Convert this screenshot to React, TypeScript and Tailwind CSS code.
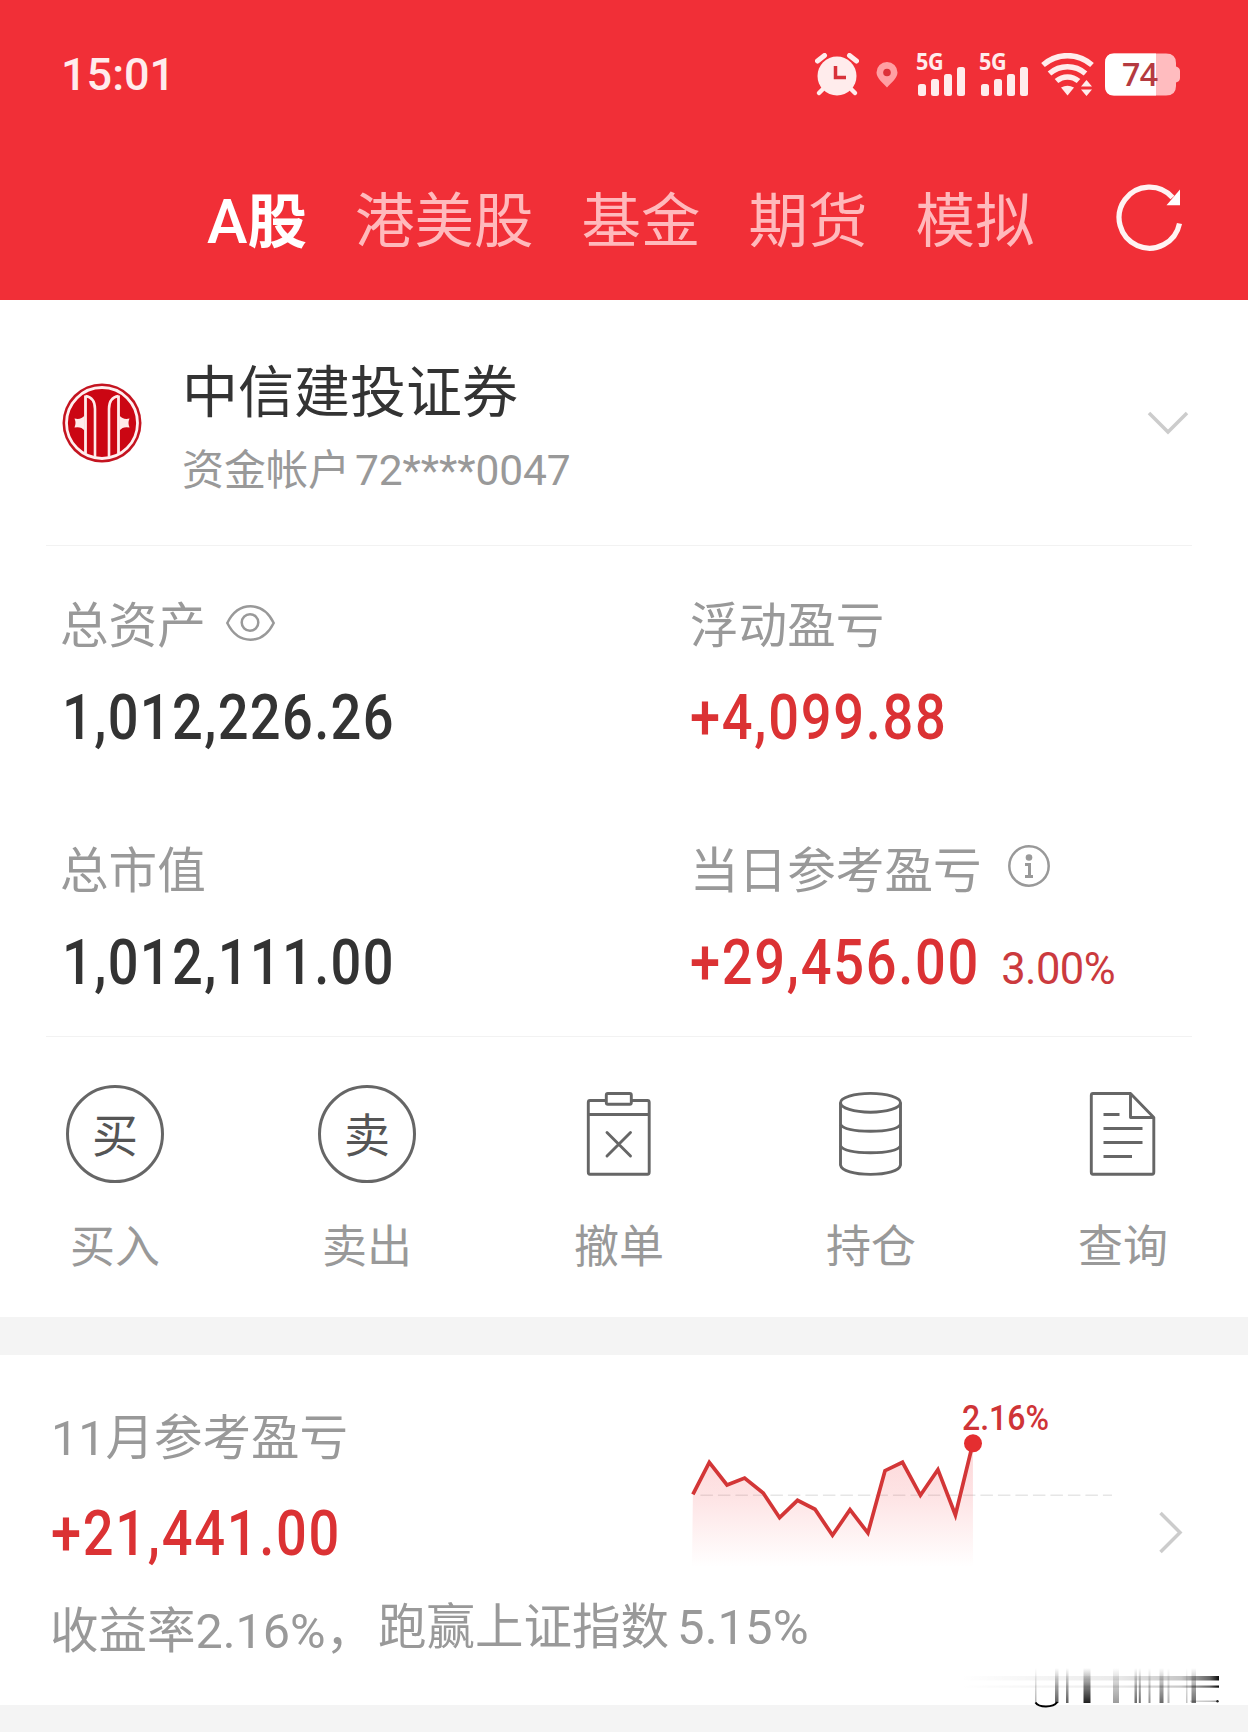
import type { ReactNode } from "react";

const tabs = ["港美股", "基金", "期货", "模拟"];

const chartPoints: [number, number][] = [
  [12.9, 99.3], [29.3, 67.3], [47, 90], [64.6, 83], [83.2, 98], [99.6, 122.7],
  [117.5, 105.3], [135, 114.3], [152.5, 140.3], [170, 114.7], [187.9, 138], [205, 75.7],
  [222.5, 67.3], [240.4, 100.3], [257.9, 74.7], [275.4, 120], [292.9, 48.3],
];

function AlarmIcon() {
  return (
    <svg width="44" height="44" viewBox="0 0 44 44" fill="none">
      <circle cx="22" cy="23" r="19.5" fill="#ffecec" />
      <path d="M2.5 8 9.5 2.5M41.5 8 34.500 2.5" stroke="#ffecec" strokeWidth="5" strokeLinecap="round" />
      <path d="M8 36 4 40M36 36 40 40" stroke="#ffecec" strokeWidth="4.500" strokeLinecap="round" />
      <path d="M20.500 13V24.500H31" stroke="#d8323a" strokeWidth="3.500" />
    </svg>
  );
}

function PinIcon() {
  return (
    <svg width="22" height="26" viewBox="0 0 22 26">
      <path d="M11 25.500C7 21 .5 16 .5 10.500a10.500 10.500 0 0 1 21 0C21.500 16 15 21 11 25.500z" fill="#ff9fa3" />
      <circle cx="11" cy="10.500" r="3.800" fill="#dd3038" />
    </svg>
  );
}

function Signal() {
  return (
    <div className="relative h-[44px] w-[50px]">
      <span className="absolute -top-[1px] left-0 origin-left scale-x-[0.92] font-['Open_Sans'] text-[23.500px] leading-[19px] font-bold tracking-[-0.5px] text-[#ffecec]">
        5G
      </span>
      <svg className="absolute inset-0" width="50" height="44" viewBox="0 0 50 44" fill="#ffecec">
        <rect x="2" y="31" width="8" height="12" rx="2.500" />
        <rect x="15" y="26" width="8" height="17" rx="2.500" />
        <rect x="28" y="21" width="8" height="22" rx="2.500" />
        <rect x="41" y="14" width="8" height="29" rx="2.500" />
      </svg>
    </div>
  );
}

function WifiIcon() {
  return (
    <svg width="53" height="43" viewBox="0 0 53 43" fill="none" stroke="#ffecec" strokeWidth="5.500">
      <path d="M2 12C16 -.5 37 -.5 51 12" />
      <path d="M8.500 20.500C19 11.500 34 11.500 44.500 20.500" />
      <path d="M15.500 28C22 22.500 31 22.500 37.500 28" />
      <path d="M20 34.500Q26.500 31 33 34.500L26.500 42.500z" fill="#ffecec" stroke="none" />
      <path d="M40 33.500 45.500 27 51 33.500zM40 36.500 45.500 43 51 36.500z" fill="#ffecec" stroke="none" />
    </svg>
  );
}

function Battery() {
  return (
    <div className="relative h-[43px] w-[75px]">
      <svg className="absolute inset-0" width="75" height="43" viewBox="0 0 75 43">
        <path d="M9 .5H61Q71 .5 71 10V13.500Q75 14.500 75 18V25Q75 28.500 71 29.500V33Q71 42.500 61 42.500H9Q0 42.500 0 33V10Q0 .5 9 .5z" fill="#ffbcbf" />
        <path d="M9 .5H51V42.500H9Q0 42.500 0 33V10Q0 .5 9 .5z" fill="#fff" />
      </svg>
      <span className="absolute top-0 left-[17px] font-['Open_Sans'] text-[32px] leading-[41px] font-semibold tracking-[-0.5px] text-[#b53a40]">
        74
      </span>
    </div>
  );
}

function RefreshIcon() {
  return (
    <svg width="70" height="70" viewBox="0 0 70 70" fill="none">
      <path d="M64.500 41.500A30.500 30.500 0 1 1 57.500 15.500" stroke="#fff3f3" strokeWidth="5.200" />
      <path d="M65 7.500V23.200H51.500z" fill="#fff" />
    </svg>
  );
}

function BrokerLogo() {
  return (
    <svg width="80" height="80" viewBox="0 0 80 80" fill="none">
      <circle cx="40" cy="40" r="39.500" fill="#c41420" />
      <circle cx="40" cy="40" r="35.500" fill="#cb0613" stroke="#fff0f0" strokeWidth="2.800" />
      <path d="M23.500 13C30 14 33 18 33 26V74M56.500 13C50 14 47 18 47 26V74" stroke="#ffeaea" strokeWidth="2.600" />
      <path d="M23.500 12.500V70.500M56.500 12.500V70.500" stroke="#ffeaea" strokeWidth="2.800" />
      <path d="M22.500 32.500Q19 37 12.500 35.500Q14.500 40 12.500 44.500Q19 43 22.500 47.500z" fill="#ffeaea" />
      <path d="M57.500 32.500Q61 37 67.500 35.500Q65.500 40 67.500 44.500Q61 43 57.500 47.500z" fill="#ffeaea" />
    </svg>
  );
}

function EyeIcon() {
  return (
    <svg width="49" height="36" viewBox="0 0 49 36" fill="none" stroke="#999" strokeWidth="2.500">
      <path d="M1.300 18C7 6.500 15 1.300 24.500 1.300S42 6.500 47.700 18C42 29.500 34 34.700 24.500 34.700S7 29.500 1.300 18z" />
      <circle cx="24" cy="17.500" r="8.300" />
    </svg>
  );
}

function InfoIcon() {
  return (
    <svg width="42" height="42" viewBox="0 0 42 42" fill="none" stroke="#999">
      <circle cx="21" cy="21" r="19.700" strokeWidth="2.500" />
      <circle cx="21" cy="12.500" r="3.300" fill="#999" stroke="none" />
      <path d="M17 19.500H21.500V31M17 31.500H25" strokeWidth="3" />
    </svg>
  );
}

function CircleIcon({ children }: { children: ReactNode }) {
  return (
    <div className="flex h-[98px] w-[98px] items-center justify-center rounded-full border-[3px] border-[#666] pt-[3px] text-[46px] leading-none text-[#555]">
      {children}
    </div>
  );
}

function CancelIcon() {
  return (
    <svg width="98" height="98" viewBox="0 0 98 98" fill="none" stroke="#666" strokeWidth="2.900" strokeLinejoin="round">
      <path d="M36 15.500H20Q18.300 15.500 18.300 17.500V87Q18.300 89.300 20 89.300H77.500Q79.200 89.300 79.200 87V17.500Q79.200 15.500 77.500 15.500H62M18.300 29.500H79.200" />
      <rect x="36.300" y="8.500" width="25" height="10.800" rx="1.500" />
      <path d="M37 47.500 60.500 71M60.500 47.500 37 71" strokeLinecap="round" />
    </svg>
  );
}

function PositionIcon() {
  return (
    <svg width="98" height="98" viewBox="0 0 98 98" fill="none" stroke="#666" strokeWidth="2.900">
      <ellipse cx="48.500" cy="17.800" rx="30" ry="9.400" />
      <path d="M18.500 17.800V80C19.500 86 32.500 89.400 48.500 89.400S77.500 86 78.500 80V17.800" />
      <path d="M18.500 39.500C21.500 44 33.500 46.200 48.500 46.200S75.500 44 78.500 39.500M18.500 61C21.500 65.500 33.500 67.700 48.500 67.700S75.500 65.500 78.500 61" />
    </svg>
  );
}

function QueryIcon() {
  return (
    <svg width="98" height="98" viewBox="0 0 98 98" fill="none" stroke="#666" strokeWidth="2.900" strokeLinejoin="round">
      <path d="M56.500 8.500H19Q17.300 8.500 17.300 10.500V87Q17.300 89.300 19 89.300H78Q79.800 89.300 79.800 87V32.500L56.500 8.500V32.500H79.800" />
      <path d="M29.500 29.500H45.500M29.500 43.500H68.500M29.500 57.500H68.500M29.500 71.500H58" />
    </svg>
  );
}

const actions = [
  { label: "买入", icon: <CircleIcon>买</CircleIcon> },
  { label: "卖出", icon: <CircleIcon>卖</CircleIcon> },
  { label: "撤单", icon: <CancelIcon /> },
  { label: "持仓", icon: <PositionIcon /> },
  { label: "查询", icon: <QueryIcon /> },
];

function Asset({ label, value, icon, extra, red }: {
  label: string;
  value: string;
  icon?: ReactNode;
  extra?: string;
  red?: boolean;
}) {
  return (
    <div className="h-[245px] pt-[36px]">
      <div className={`flex h-[90px] items-center ${red ? "" : "-ml-[2px]"}`}>
        <span className="text-[48.6px] text-[#999]">{label}</span>
        {icon}
      </div>
      <div className="flex h-[90px] items-center">
        <span
          className={`origin-left scale-x-[0.86] text-[63px] font-medium ${
            red ? "tracking-[2px] text-[#db3234]" : "tracking-[1.6px] text-[#333]"
          }`}
        >
          {value}
        </span>
        {extra && <span className="mt-[15px] -ml-[26px] text-[43.500px] tracking-[-0.6px] text-[#cb3a3e]">{extra}</span>}
      </div>
    </div>
  );
}

function ProfitChart() {
  const line = chartPoints.map((p) => p.join(",")).join(" ");
  return (
    <svg width="440" height="180" viewBox="0 0 440 180" fill="none">
      <defs>
        <linearGradient id="area" x1="0" y1="48" x2="0" y2="172" gradientUnits="userSpaceOnUse">
          <stop offset="0" stopColor="#f5333a" stopOpacity="0.2" />
          <stop offset="0.450" stopColor="#f5333a" stopOpacity="0.13" />
          <stop offset="1" stopColor="#f5333a" stopOpacity="0" />
        </linearGradient>
      </defs>
      <path d="M20.400 100.300H432" stroke="#e6e6e6" strokeWidth="1.500" strokeDasharray="12.500 5" />
      <polygon points={`12,172 ${line} 293,172`} fill="url(#area)" />
      <polyline points={line} stroke="#d33637" strokeWidth="3.700" strokeLinejoin="miter" />
      <circle cx="293" cy="48.300" r="9" fill="#e42e30" />
      <text x="282" y="35" fontSize="35" fontWeight="500" fill="#cf3437" textLength="87" lengthAdjust="spacingAndGlyphs">
        2.16%
      </text>
    </svg>
  );
}

const smearBars = [
  { x: 75, w: 1.500, o: 0.3 },
  { x: 95, w: 3.500, o: 0.65 },
  { x: 106, w: 2.500, o: 0.65 },
  { x: 123.500, w: 7, o: 0.9 },
  { x: 153, w: 6, o: 0.4 },
  { x: 174.500, w: 2.500, o: 0.6 },
  { x: 178.800, w: 2, o: 0.6 },
  { x: 188.500, w: 2, o: 0.45 },
  { x: 199.500, w: 4, o: 0.6 },
  { x: 207.500, w: 2, o: 0.3 },
  { x: 226, w: 1.500, o: 0.25 },
  { x: 231.500, w: 4.500, o: 0.6 },
];

function Smear() {
  return (
    <svg className="absolute right-[28px] bottom-[22px]" width="260" height="50" viewBox="0 0 260 50" fill="none">
      <defs>
        <linearGradient id="fade-y" x1="0" y1="8" x2="0" y2="44" gradientUnits="userSpaceOnUse">
          <stop offset="0" stopColor="#000" stopOpacity="0" />
          <stop offset="0.500" stopColor="#000" stopOpacity="0.550" />
          <stop offset="1" stopColor="#000" />
        </linearGradient>
        <linearGradient id="fade-x" x1="0" y1="0" x2="260" y2="0" gradientUnits="userSpaceOnUse">
          <stop offset="0" stopColor="#000" stopOpacity="0" />
          <stop offset="0.600" stopColor="#000" stopOpacity="0.080" />
          <stop offset="0.850" stopColor="#000" stopOpacity="0.220" />
          <stop offset="0.960" stopColor="#000" stopOpacity="0.6" />
          <stop offset="1" stopColor="#000" />
        </linearGradient>
      </defs>
      {smearBars.map((b) => (
        <rect key={b.x} x={b.x} y="8" width={b.w} height="35" fill="url(#fade-y)" opacity={b.o} />
      ))}
      <rect x="0" y="16" width="259" height="4.500" fill="url(#fade-x)" />
      <rect x="0" y="25.500" width="259" height="2.200" fill="url(#fade-x)" />
      <rect x="230" y="40.500" width="28" height="1.500" fill="url(#fade-x)" opacity="0.4" />
      <circle cx="257.500" cy="41.300" r="1.200" fill="#222" />
      <path d="M75.500 42.500Q78 46.500 86 46.500T97.500 42" stroke="#000" strokeWidth="2" />
    </svg>
  );
}

export default function App() {
  return (
    <div className="relative h-[1732px] w-[1248px] overflow-hidden bg-white font-['Roboto','Noto_Sans_CJK_SC',sans-serif] leading-none whitespace-nowrap">
      <header className="h-[300px] bg-[#f12f37]">
        <div className="flex h-[150px] items-center justify-between pr-[68px] pb-[1px] pl-[61px]">
          <span className="text-[45px] font-medium text-[#ffecec]">15:01</span>
          <div className="flex items-center">
            <AlarmIcon />
            <div className="mr-[18px] ml-[17px]">
              <PinIcon />
            </div>
            <Signal />
            <div className="mr-[12px] ml-[13px]">
              <Signal />
            </div>
            <WifiIcon />
            <div className="ml-[11px]">
              <Battery />
            </div>
          </div>
        </div>
        <div className="flex h-[150px] items-center pb-[5px] pl-[207px] text-[59.500px]">
          <span className="font-bold text-white">
            <span className="text-[61px] font-medium">A</span>股
          </span>
          <div className="ml-[48px] flex gap-[48px] text-[#ffb9bc]">
            {tabs.map((t) => (
              <span key={t}>{t}</span>
            ))}
          </div>
          <div className="mt-[-11px] ml-[81px]">
            <RefreshIcon />
          </div>
        </div>
      </header>

      <section className="mr-[56px] ml-[46px] flex h-[246px] items-center border-b border-[#f2f2f2] pl-[16px]">
        <BrokerLogo />
        <div className="ml-[40px] flex-1 pt-[20px]">
          <div className="text-[56px] leading-[77px] text-[#333]">中信建投证券</div>
          <div className="text-[42px] leading-[78px] text-[#999]">
            资金帐户<span className="ml-[5px] text-[42.500px] tracking-[-0.1px]">72****0047</span>
          </div>
        </div>
        <svg className="mr-[3px]" width="42" height="24" viewBox="0 0 42 24" fill="none">
          <path d="M2 2 21 21 40 2" stroke="#ccc" strokeWidth="3.500" />
        </svg>
      </section>

      <section className="mr-[56px] ml-[46px] grid h-[491px] grid-cols-[628px_1fr] border-b border-[#f2f2f2] pl-[16px]">
        <Asset label="总资产" value="1,012,226.26" icon={<div className="mb-[8px] ml-[20px]"><EyeIcon /></div>} />
        <Asset label="浮动盈亏" value="+4,099.88" red />
        <Asset label="总市值" value="1,012,111.00" />
        <Asset
          label="当日参考盈亏"
          value="+29,456.00"
          extra="3.00%"
          icon={<div className="mb-[13px] ml-[26px]"><InfoIcon /></div>}
          red
        />
      </section>

      <section className="flex h-[280px] justify-between pt-[48px] pr-[76px] pl-[66px]">
        {actions.map((a) => (
          <div key={a.label} className="flex w-[98px] flex-col items-center">
            {a.icon}
            <span className="mt-[35px] text-[45px] leading-[60px] text-[#999]">{a.label}</span>
          </div>
        ))}
      </section>

      <div className="h-[38px] bg-[#f4f4f4]" />

      <section className="h-[350px] pt-[37px] pl-[51px]">
        <div className="flex">
          <div className="w-[629px]">
            <div className="text-[48.500px] leading-[94px] text-[#999]">11月参考盈亏</div>
            <div className="origin-left scale-x-[0.86] text-[63px] leading-[95px] font-medium tracking-[2px] text-[#db3234]">+21,441.00</div>
          </div>
          <div className="mt-[3px] h-[180px]">
            <ProfitChart />
          </div>
          <svg className="mt-[119px] ml-[38px]" width="26" height="43" viewBox="0 0 26 43" fill="none">
            <path d="M2.500 2 22 21.500 2.500 41" stroke="#ccc" strokeWidth="3.500" />
          </svg>
        </div>
        <div className="flex text-[48.500px] leading-[102px] text-[#999]">
          <span className="-ml-[1px]">收益率2.16%，</span>
          <span className="-mt-[4px] ml-[4px]">
            跑赢上证指数<span className="ml-[8px] text-[49px]">5.15%</span>
          </span>
        </div>
      </section>

      <div className="h-[27px] bg-[#f4f4f4]" />
      <Smear />
    </div>
  );
}
